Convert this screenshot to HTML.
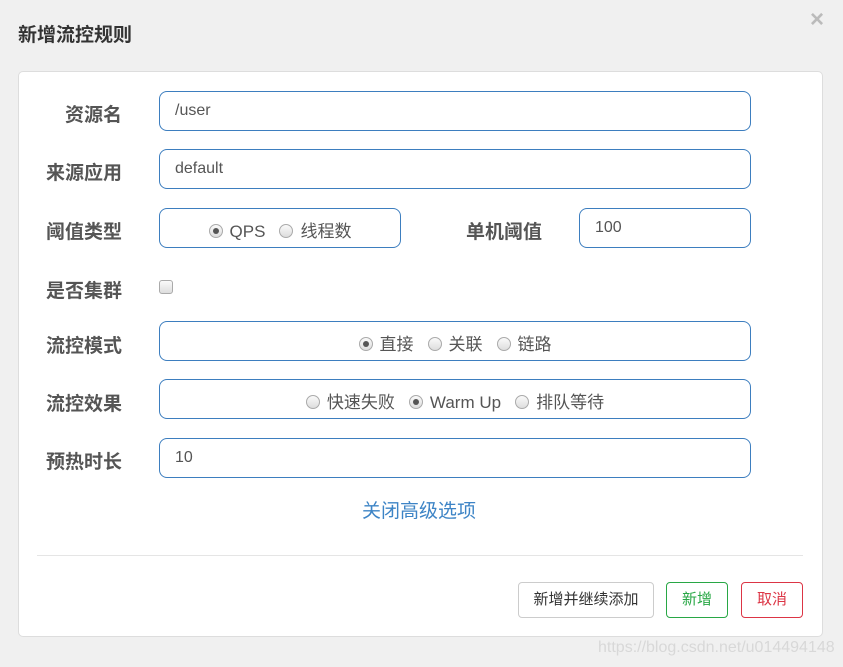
<!DOCTYPE html>
<html><head><meta charset="utf-8"><style>
*{box-sizing:border-box;margin:0;padding:0}
body{width:843px;height:667px;background:#f0f0f0;position:relative;overflow:hidden;font-family:"Liberation Sans","Noto Sans CJK SC",sans-serif;color:#555}
.a{position:absolute}
.title{left:18px;top:20px;font-size:19px;font-weight:bold;color:#333}
.x{left:810px;top:6px;font-size:24px;color:#bbb;font-weight:bold}
.panel{left:18px;top:71px;width:805px;height:566px;background:#fff;border:1px solid #ddd;border-radius:5px}
.lbl{font-size:19px;font-weight:bold;color:#555;width:110px;text-align:right;left:12px}
.in{border:1px solid #3d7ebf;border-radius:8px;height:40px;font-size:16px;color:#555;padding-left:15px;line-height:38px}
.r{display:inline-block;width:14px;height:14px;border-radius:50%;border:1px solid #aaa;background:linear-gradient(#fafafa,#ddd);vertical-align:-1px;margin-right:7px;position:relative}
.r.on::after{content:"";position:absolute;left:3px;top:3px;width:6px;height:6px;border-radius:50%;background:#555}
.grp{text-align:center;padding-left:0;line-height:45px;font-size:17px}
.grp span.t{margin-right:14px}
.btn{top:582px;height:36px;border-radius:4px;font-size:15px;text-align:center;line-height:34px;background:#fff}
</style></head><body>
<div class="a title">新增流控规则</div>
<div class="a x">×</div>
<div class="a panel"></div>
<div class="a lbl" style="top:100px">资源名</div>
<div class="a in" style="left:159px;top:91px;width:592px">/user</div>
<div class="a lbl" style="top:158px">来源应用</div>
<div class="a in" style="left:159px;top:149px;width:592px">default</div>
<div class="a lbl" style="top:217px">阈值类型</div>
<div class="a in grp" style="left:159px;top:208px;width:242px"><span class="r on"></span><span class="t">QPS</span><span class="r"></span>线程数</div>
<div class="a lbl" style="top:217px;left:432px">单机阈值</div>
<div class="a in" style="left:579px;top:208px;width:172px">100</div>
<div class="a lbl" style="top:276px">是否集群</div>
<div class="a" style="left:159px;top:280px;width:14px;height:14px;border:1px solid #aaa;border-radius:3px;background:linear-gradient(#fafafa,#ddd)"></div>
<div class="a lbl" style="top:331px">流控模式</div>
<div class="a in grp" style="left:159px;top:321px;width:592px"><span class="r on"></span><span class="t">直接</span><span class="r"></span><span class="t">关联</span><span class="r"></span>链路</div>
<div class="a lbl" style="top:389px">流控效果</div>
<div class="a in grp" style="left:159px;top:379px;width:592px"><span class="r"></span><span class="t">快速失败</span><span class="r on"></span><span class="t">Warm Up</span><span class="r"></span>排队等待</div>
<div class="a lbl" style="top:447px">预热时长</div>
<div class="a in" style="left:159px;top:438px;width:592px">10</div>
<div class="a" style="left:362px;top:496px;font-size:19px;color:#3d84c6">关闭高级选项</div>
<div class="a" style="left:37px;top:555px;width:766px;height:1px;background:#e5e5e5"></div>
<div class="a btn" style="left:518px;width:136px;border:1px solid #ccc;color:#333">新增并继续添加</div>
<div class="a btn" style="left:666px;width:62px;border:1px solid #28a745;color:#28a745">新增</div>
<div class="a btn" style="left:741px;width:62px;border:1px solid #dc3545;color:#dc3545">取消</div>
<div class="a" style="left:598px;top:639px;font-size:16px;color:#d8d8d8;white-space:nowrap">https://blog.csdn.net/u014494148</div>
</body></html>
